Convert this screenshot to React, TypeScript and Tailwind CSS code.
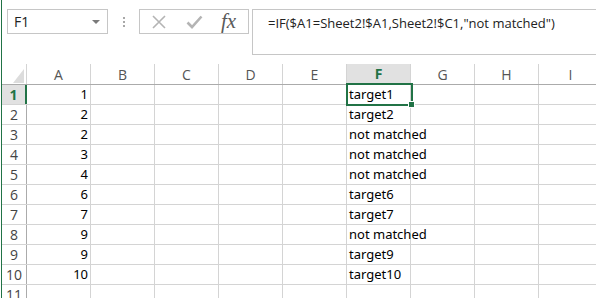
import React from 'react'

const cols = ['A', 'B', 'C', 'D', 'E', 'F', 'G', 'H', 'I']

const rows: { n: number; a: string; f: string }[] = [
  { n: 1, a: '1', f: 'target1' },
  { n: 2, a: '2', f: 'target2' },
  { n: 3, a: '2', f: 'not matched' },
  { n: 4, a: '3', f: 'not matched' },
  { n: 5, a: '4', f: 'not matched' },
  { n: 6, a: '6', f: 'target6' },
  { n: 7, a: '7', f: 'target7' },
  { n: 8, a: '9', f: 'not matched' },
  { n: 9, a: '9', f: 'target9' },
  { n: 10, a: '10', f: 'target10' },
  { n: 11, a: '', f: '' },
]

const uiFont = { fontFamily: '"Open Sans", "Noto Sans", sans-serif' }
const cellFont = { fontFamily: '"Noto Sans", "Open Sans", sans-serif' }

function FormulaBar() {
  return (
    <div className="flex items-start h-[64px] pt-[9px]" style={uiFont}>
      <div className="ml-[5px] w-[101px] h-[25px] border border-[#c6c6c6] flex items-center justify-between pl-[6px] pr-[7px] text-[14px] text-[#222]">
        <span>F1</span>
        <span className="w-0 h-0 border-l-[4px] border-r-[4px] border-t-[4px] border-l-transparent border-r-transparent border-t-[#7a7a7a]" />
      </div>
      <div className="w-[31px] h-[25px] flex flex-col items-center justify-center gap-[2px]">
        <span className="w-[2px] h-[2px] bg-[#a8a8a8]" />
        <span className="w-[2px] h-[2px] bg-[#a8a8a8]" />
        <span className="w-[2px] h-[2px] bg-[#a8a8a8]" />
      </div>
      <div className="w-[110px] h-[25px] border border-[#c6c6c6] flex items-center">
        <svg width="16" height="16" viewBox="0 0 16 16" className="ml-[11px]">
          <path d="M2 2 L14 14 M14 2 L2 14" stroke="#b4b4b4" strokeWidth="1.6" fill="none" />
        </svg>
        <svg width="17" height="14" viewBox="0 0 17 14" className="ml-[19px]">
          <path d="M1.5 7.5 L6 12 L15.5 1.5" stroke="#b4b4b4" strokeWidth="2.6" fill="none" />
        </svg>
        <span
          className="ml-[18px] text-[21px] italic leading-none text-[#5a5a5a]"
          style={{ fontFamily: '"Liberation Serif", "DejaVu Serif", serif' }}
        >
          fx
        </span>
      </div>
      <div className="ml-[3px] flex-1 h-[46px] border-t border-l border-b border-[#c6c6c6] pl-[15px] pt-[4px] text-[13px] text-[#222] whitespace-nowrap">
        =IF($A1=Sheet2!$A1,Sheet2!$C1,"not matched")
      </div>
    </div>
  )
}

function Grid() {
  return (
    <div className="relative">
      <div className="flex h-[21px] border-b border-[#ababab]" style={uiFont}>
        <div className="relative w-[25px] shrink-0 border-r border-[#d4d4d4]">
          <svg width="11" height="14" viewBox="0 0 11 14" className="absolute right-[2px] bottom-[1px]">
            <path d="M11 0 L11 14 L0 14 Z" fill="#dcdcdc" />
          </svg>
        </div>
        {cols.map((c) => (
          <div
            key={c}
            className={
              c === 'F'
                ? 'w-[64px] shrink-0 bg-[#e1e1e1] border-r border-[#d4d4d4] border-b-2 border-b-[#217346] -mb-[1px] flex items-center justify-center text-[14px] font-bold text-[#217346]'
                : 'w-[64px] shrink-0 border-r border-[#d4d4d4] flex items-center justify-center text-[14px] text-[#555]'
            }
          >
            {c}
          </div>
        ))}
      </div>
      {rows.map((r) => (
        <div key={r.n} className="flex h-[20px] border-b border-[#d4d4d4]">
          <div
            className={
              r.n === 1
                ? 'w-[25px] shrink-0 bg-[#e1e1e1] border-r-2 border-[#217346] flex items-center justify-center text-[14px] font-bold text-[#217346]'
                : 'w-[25px] shrink-0 border-r border-[#ababab] flex items-center justify-center text-[14px] text-[#444]'
            }
            style={uiFont}
          >
            {r.n}
          </div>
          {cols.map((c) => (
            <div
              key={c}
              className={
                'w-[64px] shrink-0 border-r border-[#d4d4d4] flex items-center text-[13px] text-black whitespace-nowrap overflow-visible ' +
                (c === 'A' ? 'justify-end pr-[2px]' : 'pl-[2px]')
              }
              style={cellFont}
            >
              {c === 'A' ? r.a : c === 'F' ? r.f : ''}
            </div>
          ))}
        </div>
      ))}
      <div className="absolute left-[344px] top-[19px] w-[67px] h-[23px] border-2 border-[#217346]" />
      <div className="absolute left-[406px] top-[37px] w-[7px] h-[7px] bg-[#217346] border border-white" />
    </div>
  )
}

export default function App() {
  return (
    <div className="w-[596px] h-[298px] bg-white overflow-hidden flex">
      <div className="w-[1px] shrink-0" />
      <div className="w-[1px] shrink-0 bg-[#217346]" />
      <div className="flex-1 min-w-0 overflow-hidden">
        <FormulaBar />
        <Grid />
      </div>
    </div>
  )
}
